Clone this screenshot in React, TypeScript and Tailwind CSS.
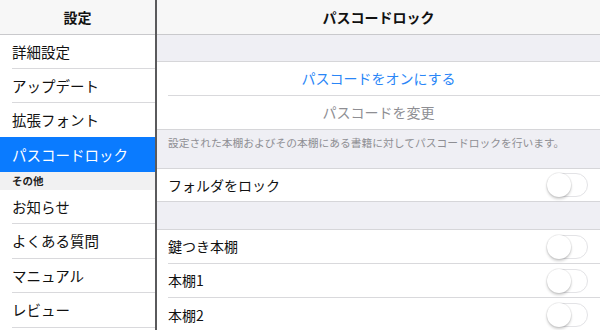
const font = { fontFamily: '"Noto Sans CJK JP", "Noto Sans", sans-serif' };

function Toggle() {
  return (
    <div className="relative h-[24px] w-[41px] rounded-full border border-[#e3e3e6] bg-white">
      <div className="absolute -left-px -top-px h-[24px] w-[24px] rounded-full bg-white shadow-[0_2px_3px_rgba(0,0,0,0.2),0_0_0_1px_rgba(0,0,0,0.05)]" />
    </div>
  );
}

function SideRow({ label, h, last }: { label: string; h: string; last?: boolean }) {
  return (
    <div className={`${h} pl-[12px] bg-white`}>
      <div className={`flex h-full items-center text-[14.5px] text-[#111] ${last ? "" : "border-b border-[#d9d9dc]"}`}>
        {label}
      </div>
    </div>
  );
}

function SwitchRow({ label, h, border }: { label: string; h: string; border?: boolean }) {
  return (
    <div className={`${h} bg-white pl-[11px]`}>
      <div className={`flex h-full items-center justify-between pr-[12px] text-[14px] text-[#111] ${border ? "border-b border-[#d9d9dc]" : ""}`}>
        <span>{label}</span>
        <Toggle />
      </div>
    </div>
  );
}

export default function App() {
  return (
    <div className="flex h-[330px] w-[600px] overflow-hidden bg-white" style={font}>
      {/* sidebar */}
      <div className="flex w-[155px] flex-col">
        <div className="flex h-[35px] shrink-0 items-center justify-center border-b border-[#c9c9cc] bg-[#f7f7f7] text-[14px] font-bold text-[#111]">
          設定
        </div>
        <SideRow label="詳細設定" h="h-[34px]" />
        <SideRow label="アップデート" h="h-[34px]" />
        <SideRow label="拡張フォント" h="h-[34px]" last />
        <div className="flex h-[35px] shrink-0 items-center bg-[#0a7bff] pl-[12px] text-[14.5px] text-white">
          パスコードロック
        </div>
        <div className="flex h-[18px] shrink-0 items-center bg-[#f1f1f2] pl-[12px] text-[10.5px] font-bold text-[#222]">
          その他
        </div>
        <SideRow label="お知らせ" h="h-[34px]" />
        <SideRow label="よくある質問" h="h-[35px]" />
        <SideRow label="マニュアル" h="h-[34px]" />
        <SideRow label="レビュー" h="h-[35px]" />
      </div>
      <div className="w-[2px] bg-[#5a5a5c]" />
      {/* main */}
      <div className="flex flex-1 flex-col bg-[#efeff4]">
        <div className="flex h-[35px] shrink-0 items-center justify-center border-b border-[#c9c9cc] bg-[#f7f7f7] text-[14px] font-bold text-[#111]">
          パスコードロック
        </div>
        <div className="h-[27px] shrink-0 border-b border-[#d6d6d9]" />
        <div className="shrink-0 bg-white pl-[11px]">
          <div className="flex h-[34px] items-center justify-center border-b border-[#d9d9dc] pr-[11px] text-[14px] text-[#2a86f7]">
            パスコードをオンにする
          </div>
          <div className="flex h-[33px] items-center justify-center pr-[11px] text-[14px] text-[#8e8e93]">
            パスコードを変更
          </div>
        </div>
        <div className="h-[40px] shrink-0 border-y border-[#d6d6d9] pl-[11px] pt-[5px] text-[10.75px] text-[#8e8e93]">
          設定された本棚およびその本棚にある書籍に対してパスコードロックを行います。
        </div>
        <SwitchRow label="フォルダをロック" h="h-[32px] shrink-0" />
        <div className="h-[29px] shrink-0 border-y border-[#d6d6d9]" />
        <SwitchRow label="鍵つき本棚" h="h-[34px] shrink-0" border />
        <SwitchRow label="本棚1" h="h-[34px] shrink-0" border />
        <SwitchRow label="本棚2" h="h-[34px] shrink-0" />
      </div>
    </div>
  );
}
